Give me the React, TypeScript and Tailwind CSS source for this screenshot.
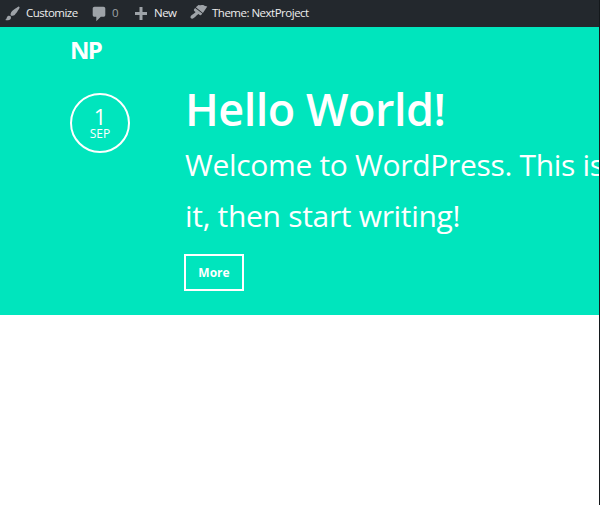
import React from 'react';

function BrushIcon() {
  return (
    <svg viewBox="0 0 20 20" className="-mt-[1px] h-[17px] w-[17px] fill-[#9ea3a8]">
      <path d="M18.33 3.57s.27-.8-.31-1.36c-.53-.52-1.22-.24-1.22-.24-.61.3-5.76 3.47-7.67 5.57-.86.96-2.06 3.79-1.09 4.82.92.98 3.96-.17 4.79-1 2.06-2.06 5.21-7.17 5.5-7.79zM1.4 17.65c2.37-1.56 1.46-3.41 3.23-4.64.93-.65 2.22-.62 3.08.29.63.67.8 2.57-.16 3.46-1.57 1.45-4 1.55-6.15.89z" />
    </svg>
  );
}

function CommentIcon() {
  return (
    <svg viewBox="0 0 20 20" className="h-[18px] w-[18px] fill-[#9ea3a8]">
      <path d="M5 2h10c1.1 0 2 .9 2 2v7c0 1.100-.9 2-2 2h-3l-5 5v-5H5c-1.100 0-2-.9-2-2V4c0-1.100.9-2 2-2z" />
    </svg>
  );
}

function PlusIcon() {
  return (
    <svg viewBox="0 0 18 18" className="-mt-[1px] h-[18px] w-[18px] fill-[#9ea3a8]">
      <path d="M15 8v3h-4.500v5h-3v-5H3V8h4.500V3h3v5z" />
    </svg>
  );
}

function ThemeIcon() {
  return (
    <svg viewBox="0 0 18 16" className="-mt-[4px] h-4 w-[18px] fill-[#9ea3a8]">
      <path d="M5.800 3.300L8.500 1c.8-.3 1.200.2 2 .2 1.200 0 2.200-.5 3.200 0 1 .6 2 .9 3.600 1.200l-4.400 6.700z" />
      <path d="M5.100 4l7.200 5.600-.9 1.200c-.5.6-1.100.5-1.700.1l-1.200-.9c-.7.4-1.400 1-2.200 1.800-1.200 1.300-2.500 2.700-4 2.900C1.100 14.800.2 13.900.5 12.800c.4-1.400 2.100-2.200 3.500-3.200.7-.5 1.200-.9 1.600-1.500l-1.100-.9c-.7-.5-.8-1.200-.4-1.900z" />
    </svg>
  );
}

export default function App() {
  return (
    <div className="h-[505px] w-[600px] overflow-hidden border-r border-[#14181b] bg-white font-['Open_Sans',sans-serif] text-white">
      <nav className="flex h-[27px] bg-[#23282d] text-[11.5px] font-medium tracking-[-0.5px] whitespace-nowrap text-[#eeeeee]">
        <div className="flex w-[90px] items-center gap-[5px] pl-[4px]">
          <BrushIcon />
          <span className="-mt-[2px]">Customize</span>
        </div>
        <div className="flex w-[42px] items-center gap-[4px]">
          <CommentIcon />
          <span className="-mt-[2px] text-[#9ea3a8]">0</span>
        </div>
        <div className="flex w-[58px] items-center gap-[4px]">
          <PlusIcon />
          <span className="-mt-[2px]">New</span>
        </div>
        <div className="flex items-center gap-[4px]">
          <ThemeIcon />
          <span className="-mt-[2px]">Theme: NextProject</span>
        </div>
      </nav>
      <header className="h-[288px] bg-[#00e5bd] pt-[6px]">
        <div className="pl-[70px] text-[24px] leading-[34px] font-bold tracking-[-1.8px]">NP</div>
        <div className="flex pt-[13px] pl-[70px]">
          <div className="mt-[13px] flex h-[60px] w-[60px] shrink-0 flex-col items-center rounded-full border-2 border-white pt-[9px]">
            <span className="text-[22px] leading-[24px]">1</span>
            <span className="-mt-[1px] text-[12px] leading-[13px]">SEP</span>
          </div>
          <main className="ml-[55px] whitespace-nowrap">
            <h1 className="text-[45px] leading-[57px] font-semibold tracking-[-0.5px]">Hello World!</h1>
            <p className="pt-[2px] text-[30px] leading-[51px] tracking-[-0.31px]">
              Welcome to WordPress. This is
              <br />
              it, then start writing!
            </p>
            <a className="mt-[13px] -ml-[1px] flex h-[37px] w-[60px] items-center justify-center border-2 border-white text-[12px] font-bold">
              More
            </a>
          </main>
        </div>
      </header>
    </div>
  );
}
